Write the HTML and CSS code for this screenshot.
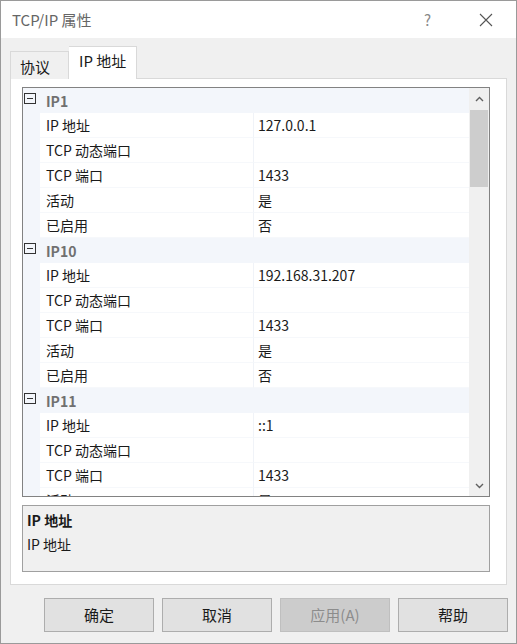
FILE: index.html
```html
<!DOCTYPE html>
<html lang="zh-CN">
<head>
    <meta charset="UTF-8">
    <title>TCP/IP 属性</title>
    <link rel="stylesheet" href="styles.css">
</head>
<body>
    <div class="window">
        <!-- Title bar -->
        <div class="titlebar">
            <span class="title">TCP/IP 属性</span>
            <span class="help">?</span>
            <svg class="close" width="14" height="14" viewBox="0 0 14 14">
                <path d="M1 1 L13 13 M13 1 L1 13" stroke="#555" stroke-width="1.1" fill="none"/>
            </svg>
        </div>

        <div class="body">
            <!-- Tabs -->
            <div class="tabs">
                <div class="tab">协议</div>
                <div class="tab active">IP 地址</div>
            </div>

            <div class="panel">
                <!-- Property grid -->
                <div class="grid">
                    <div class="rows">
                        <div class="cat"><span class="toggle"></span><span class="cat-name">IP1</span></div>
                        <div class="row"><span class="name">IP 地址</span><span class="value">127.0.0.1</span></div>
                        <div class="row"><span class="name">TCP 动态端口</span><span class="value"></span></div>
                        <div class="row"><span class="name">TCP 端口</span><span class="value">1433</span></div>
                        <div class="row"><span class="name">活动</span><span class="value">是</span></div>
                        <div class="row"><span class="name">已启用</span><span class="value">否</span></div>

                        <div class="cat"><span class="toggle"></span><span class="cat-name">IP10</span></div>
                        <div class="row"><span class="name">IP 地址</span><span class="value">192.168.31.207</span></div>
                        <div class="row"><span class="name">TCP 动态端口</span><span class="value"></span></div>
                        <div class="row"><span class="name">TCP 端口</span><span class="value">1433</span></div>
                        <div class="row"><span class="name">活动</span><span class="value">是</span></div>
                        <div class="row"><span class="name">已启用</span><span class="value">否</span></div>

                        <div class="cat"><span class="toggle"></span><span class="cat-name">IP11</span></div>
                        <div class="row"><span class="name">IP 地址</span><span class="value">::1</span></div>
                        <div class="row"><span class="name">TCP 动态端口</span><span class="value"></span></div>
                        <div class="row"><span class="name">TCP 端口</span><span class="value">1433</span></div>
                        <div class="row"><span class="name">活动</span><span class="value">是</span></div>
                    </div>
                    <div class="scrollbar">
                        <div class="arrow">
                            <svg width="9" height="6" viewBox="0 0 9 6"><path d="M1 5 L4.5 1.5 L8 5" stroke="#606060" stroke-width="1.4" fill="none"/></svg>
                        </div>
                        <div class="track"><div class="thumb"></div></div>
                        <div class="arrow">
                            <svg width="9" height="6" viewBox="0 0 9 6"><path d="M1 1 L4.5 4.5 L8 1" stroke="#606060" stroke-width="1.4" fill="none"/></svg>
                        </div>
                    </div>
                </div>

                <!-- Description box -->
                <div class="desc">
                    <div class="desc-title">IP 地址</div>
                    <div class="desc-text">IP 地址</div>
                </div>
            </div>

            <!-- Dialog buttons -->
            <div class="buttons">
                <div class="btn">确定</div>
                <div class="btn">取消</div>
                <div class="btn disabled">应用(A)</div>
                <div class="btn">帮助</div>
            </div>
        </div>
    </div>
</body>
</html>
```

FILE: styles.css
```css
html, body {
    margin: 0;
    padding: 0;
    background: #f0f0f0;
}

body {
    font-family: "Noto Sans CJK SC", "Microsoft YaHei", sans-serif;
    font-size: 14px;
    color: #1a1a1a;
}

.window {
    width: 517px;
    height: 644px;
    box-sizing: border-box;
    border: 1px solid #9a9a9a;
    background: #f0f0f0;
    display: flex;
    flex-direction: column;
}

/* Title bar */
.titlebar {
    height: 37px;
    background: #fff;
    display: flex;
    align-items: center;
    padding-left: 11px;
    flex-shrink: 0;
}

.title {
    font-size: 15px;
    color: #666;
    flex: 1;
}

.help {
    color: #888;
    font-size: 15px;
    margin-right: 48px;
}

.close {
    margin-right: 23px;
}

/* Tabs */
.body {
    flex: 1;
    display: flex;
    flex-direction: column;
    padding: 0 9px 0 9px;
}

.tabs {
    display: flex;
    height: 41px;
    align-items: flex-end;
    margin-bottom: -1px;
    position: relative;
    z-index: 1;
}

.tab {
    height: 28px;
    width: 59px;
    box-sizing: border-box;
    border: 1px solid #d9d9d9;
    border-bottom: none;
    background: #f0f0f0;
    font-size: 15px;
    padding-left: 9px;
    line-height: 29px;
}

.tab.active {
    height: 33px;
    width: 68px;
    background: #fff;
    border-left: none;
    padding-left: 10px;
    line-height: 28px;
}

.panel {
    height: 507px;
    box-sizing: border-box;
    border: 1px solid #d9d9d9;
    background: #fff;
    padding: 8px 16px 0 11px;
}

/* Property grid */
.grid {
    height: 410px;
    box-sizing: border-box;
    border: 1px solid #828282;
    display: flex;
    overflow: hidden;
}

.rows {
    flex: 1;
    overflow: hidden;
    background: #f3f6fb;
}

.cat {
    height: 25px;
    display: flex;
    align-items: center;
    background: #f3f6fb;
}

.toggle {
    width: 10px;
    height: 9px;
    border: 1px solid #333;
    margin: 0 0 4px 1px;
    position: relative;
    flex-shrink: 0;
}

.toggle::after {
    content: "";
    position: absolute;
    left: 2px;
    right: 2px;
    top: 4px;
    height: 1px;
    background: #333;
}

.cat-name {
    margin-left: 10px;
    font-weight: bold;
    color: #707070;
}

.row {
    height: 25px;
    display: flex;
    margin-left: 17px;
    background: #fff;
}

.name, .value {
    box-sizing: border-box;
    height: 25px;
    line-height: 24px;
    border-bottom: 1px solid #f6f8fb;
}

.name {
    width: 214px;
    padding-left: 6px;
    border-right: 1px solid #f0f3f8;
}

.value {
    flex: 1;
    padding-left: 4px;
}

/* Scrollbar */
.scrollbar {
    width: 20px;
    background: #f0f0f0;
    display: flex;
    flex-direction: column;
}

.arrow {
    height: 21px;
    display: flex;
    align-items: center;
    justify-content: center;
}

.track {
    flex: 1;
}

.thumb {
    height: 77px;
    background: #cdcdcd;
    margin: 1px 1px 0 1px;
}

/* Description box */
.desc {
    margin-top: 8px;
    height: 67px;
    box-sizing: border-box;
    border: 1px solid #a0a0a0;
    background: #f0f0f0;
    padding: 2px 4px;
    line-height: 24px;
}

.desc-title {
    font-weight: bold;
}

/* Dialog buttons */
.buttons {
    display: flex;
    justify-content: flex-end;
    gap: 8px;
    padding-top: 13px;
    margin-right: -1px;
}

.btn {
    width: 110px;
    height: 34px;
    box-sizing: border-box;
    border: 1px solid #adadad;
    background: #e1e1e1;
    text-align: center;
    line-height: 32px;
    font-size: 15px;
}

.btn.disabled {
    background: #cccccc;
    border-color: #bfbfbf;
    color: #8c8c8c;
}
```
